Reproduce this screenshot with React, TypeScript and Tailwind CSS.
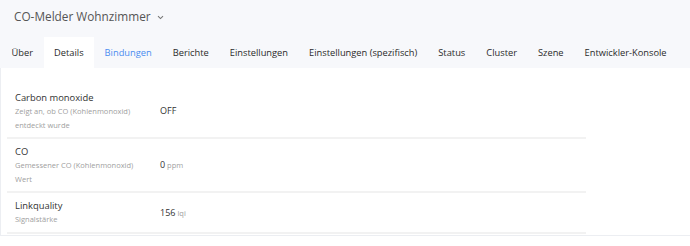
import React from 'react';

const tabs = [
    'Über',
    'Details',
    'Bindungen',
    'Berichte',
    'Einstellungen',
    'Einstellungen (spezifisch)',
    'Status',
    'Cluster',
    'Szene',
    'Entwickler-Konsole',
];

const rows = [
    { name: 'Carbon monoxide', desc: 'Zeigt an, ob CO (Kohlenmonoxid) entdeckt wurde', value: 'OFF', unit: '' },
    { name: 'CO', desc: 'Gemessener CO (Kohlenmonoxid) Wert', value: '0', unit: 'ppm' },
    { name: 'Linkquality', desc: 'Signalstärke', value: '156', unit: 'lqi' },
];

const App: React.FC = () => {
    return (
        <div className="w-[690px] h-[246px] overflow-hidden bg-white" style={{ fontFamily: '"Open Sans", "Noto Sans", sans-serif' }}>
            <div className="bg-[#f7f8fb]">
                <div className="h-[37px] flex items-center pl-[14px] pb-[3px] gap-[6px]">
                    <span className="text-[11.8px] text-[#555]">CO-Melder Wohnzimmer</span>
                    <svg width="7" height="5" viewBox="0 0 7 5" className="mt-[1px]">
                        <path d="M1 1.2 L3.5 3.6 L6 1.2" fill="none" stroke="#777" strokeWidth="1.1" />
                    </svg>
                </div>
                <div className="flex h-[31px] pl-[1px]">
                    {tabs.map((t) => (
                        <div
                            key={t}
                            className={
                                'flex items-center px-[10.5px] text-[9.3px] whitespace-nowrap ' +
                                (t === 'Details' ? 'bg-white text-[#2a2a2a]' : t === 'Bindungen' ? 'text-[#4a8cf0]' : 'text-[#2a2a2a]')
                            }
                        >
                            {t}
                        </div>
                    ))}
                </div>
            </div>

            <div className="border-l border-[#eceef2] border-b pt-[17px] pb-[1px]">
                <div className="ml-[6px] w-[579px]">
                    {rows.map((r) => (
                        <div key={r.name} className="flex items-center border-b-2 border-[#f2f2f2] pt-[5px] pb-[5px]">
                            <div className="w-[153px] pl-[8px] pr-[18px] shrink-0">
                                <div className="text-[9.4px] leading-[15px] text-[#333]">{r.name}</div>
                                <div className="text-[7.5px] leading-[13.5px] text-[#a0a0a0]">{r.desc}</div>
                            </div>
                            <div className="text-[9px] text-[#333]">
                                {r.value}
                                {r.unit && <span className="text-[7.5px] text-[#a0a0a0]"> {r.unit}</span>}
                            </div>
                        </div>
                    ))}
                </div>
            </div>
        </div>
    );
};

export default App;
